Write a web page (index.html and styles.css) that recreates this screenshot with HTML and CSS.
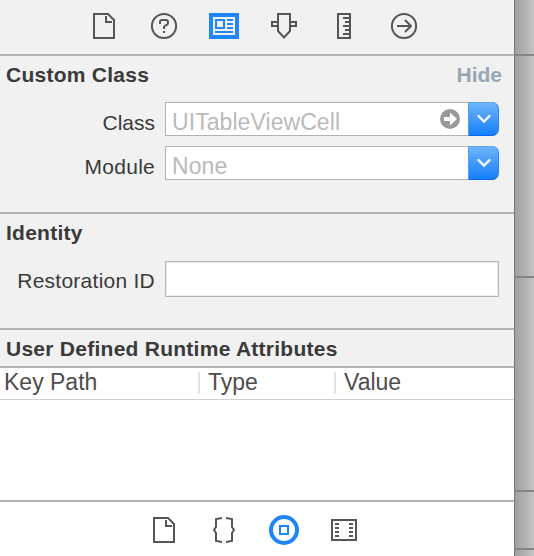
FILE: index.html
```html
<!DOCTYPE html>
<html lang="en">
<head>
<meta charset="utf-8">
<title>Identity Inspector</title>
<link rel="stylesheet" href="styles.css">
</head>
<body>
<div class="window">
  <main class="inspector">
    <nav class="toolbar">
      <svg class="icon" viewBox="0 0 30 30"><path d="M5 3H19L25 9V27H5ZM17 5V11H23"/></svg>
      <svg class="icon" viewBox="0 0 30 30"><circle cx="15" cy="15" r="12.1"/><path d="M11 13V11Q11 9 13 9H17Q19 9 19 11V12Q19 13.500 17 14.200Q15 15 15 16V18M15 20V22"/></svg>
      <svg class="icon" viewBox="0 0 30 30"><path class="blue-fill" d="M0 2H30V28H0Z"/><path class="white-fill" d="M4 6H26V24H4Z"/><path class="blue" d="M7 9H15V17H7ZM18 9H24M18 13H24M18 17H24M6 21H24"/></svg>
      <svg class="icon" viewBox="0 0 30 30"><path d="M9 3H21V20L15 26.500L9 20ZM8 11H3V15H8M22 11H27V15H22"/></svg>
      <svg class="icon" viewBox="0 0 30 30"><path d="M9 3H21V27H9ZM14 7H21M16 11H21M14 15H21M16 19H21M14 23H21"/></svg>
      <svg class="icon" viewBox="0 0 30 30"><circle cx="15" cy="15" r="12.1"/><path d="M8 15H21M16 9L22 15L16 21"/></svg>
    </nav>

    <section class="section custom">
      <header class="heading"><h2>Custom Class</h2><span class="hide">Hide</span></header>
      <div class="row">
        <label>Class</label>
        <div class="combo">
          <span class="value">UITableViewCell</span>
          <svg class="jump" viewBox="0 0 20 20"><circle cx="10" cy="10" r="10"/><path d="M4 8H10V3.500L17 10L10 16.500V12H4Z"/></svg>
          <span class="drop"><svg viewBox="0 0 14 10"><path d="M1.500 2L7 7.500L12.500 2"/></svg></span>
        </div>
      </div>
      <div class="row">
        <label class="wide">Module</label>
        <div class="combo">
          <span class="value">None</span>
          <span class="drop"><svg viewBox="0 0 14 10"><path d="M1.500 2L7 7.500L12.500 2"/></svg></span>
        </div>
      </div>
    </section>

    <section class="section identity">
      <header class="heading"><h2>Identity</h2></header>
      <div class="row">
        <label class="wide">Restoration ID</label>
        <div class="input"></div>
      </div>
    </section>

    <section class="section attributes">
      <header class="heading"><h2>User Defined Runtime Attributes</h2></header>
    </section>

    <div class="table">
      <div class="columns"><span>Key Path</span><span>Type</span><span>Value</span></div>
    </div>

    <footer class="library">
      <svg class="icon" viewBox="0 0 30 30"><path d="M5 3H19L25 9V27H5ZM17 5V11H23"/></svg>
      <svg class="icon" viewBox="0 0 30 30"><path d="M13 3L7 4V12L5 15L7 18V26L13 27M17 3L23 4V12L25 15L23 18V26L17 27"/></svg>
      <svg class="icon" viewBox="0 0 30 30"><circle class="blue ring" cx="15" cy="15" r="13"/><path class="blue" d="M11 11H19V19H11Z"/></svg>
      <svg class="icon" viewBox="0 0 30 30"><path d="M3 5H27V25H3ZM6 9H10M6 13H10M6 17H10M6 21H10M20 9H24M20 13H24M20 17H24M20 21H24"/></svg>
    </footer>
  </main>
  <aside class="edge"><i></i><i></i><i></i><i></i><i></i></aside>
</div>
</body>
</html>
```
FILE: styles.css
```css
* { box-sizing: border-box; }
body {
  margin: 0;
  overflow: hidden;
  font-family: "Liberation Sans", Arial, sans-serif;
  color: #3a3a3a;
}
.window { display: grid; grid-template-columns: 514px 20px; height: 556px; }
.inspector { display: flex; flex-direction: column; background: #f1f1f1; }

.toolbar {
  display: flex;
  justify-content: center;
  gap: 30px;
  height: 56px;
  padding: 11px 6px 0 0;
  border-bottom: 2px solid #b2b2b2;
}
.icon { width: 30px; height: 30px; fill: none; stroke: #565656; stroke-width: 2; }
.blue { stroke: #1f85fb; }
.ring { stroke-width: 4; }
.blue-fill { fill: #1f85fb; stroke: none; }
.white-fill { fill: #f1f1f1; stroke: none; }

.section { border-bottom: 2px solid #b2b2b2; }
.custom { height: 158px; }
.identity { height: 116px; }
.attributes { height: 38px; }
.heading {
  display: flex;
  justify-content: space-between;
  height: 38px;
  padding: 0 12px 0 6px;
  font-size: 21px;
  font-weight: bold;
  line-height: 38px;
}
h2 { margin: 0; font-size: 21px; letter-spacing: .26px; }
.hide { color: #98a6b4; }

.row { display: flex; height: 34px; margin: 8px 0 10px; }
label {
  width: 155px;
  margin-right: 10px;
  text-align: right;
  font-size: 21px;
  line-height: 42px;
}
.wide { letter-spacing: .25px; }
.combo {
  display: flex;
  align-items: center;
  width: 334px;
  height: 34px;
  padding-left: 6px;
  background: #fff;
  border: 1px solid #b2b2b2;
  border-right: 0;
  border-radius: 0 7px 7px 0;
}
.value {
  flex: 1;
  padding-top: 6px;
  color: #bababa;
  font-size: 23px;
  letter-spacing: .07px;
  line-height: 32px;
}
.jump { width: 20px; height: 20px; margin-right: 8px; fill: #999; }
.jump path { fill: #fff; }
.drop {
  display: flex;
  align-items: center;
  justify-content: center;
  width: 31px;
  height: 34px;
  background: linear-gradient(#6eb5fa, #157efb);
  border: 1px solid;
  border-color: #5ba6ef #2785f2 #0a69ef #4a9ef6;
  border-radius: 0 7px 7px 0;
}
.drop svg { width: 14px; height: 10px; fill: none; stroke: #fff; stroke-width: 2.3; stroke-linecap: round; }
.identity .row { margin-top: 9px; }
.identity label { line-height: 40px; }
.input {
  width: 334px;
  height: 36px;
  background: #fff;
  border: 1px solid #b2b2b2;
  box-shadow: inset 0 0 0 1px #ededed;
}

.table { height: 134px; background: #fff; border-bottom: 2px solid #b2b2b2; }
.columns {
  display: grid;
  grid-template-columns: 198px 136px 1fr;
  height: 32px;
  padding-top: 4px;
  border-bottom: 1px solid #d2d2d2;
  color: #4d4d4d;
  font-size: 23px;
  line-height: 20px;
}
.columns span { height: 22px; padding-left: 4px; }
.columns span + span { padding-left: 8px; border-left: 2px solid #e2e2e2; }

.library {
  display: flex;
  flex: 1;
  justify-content: center;
  gap: 30px;
  padding: 13px 6px 0 0;
  background: #fff;
}

.edge {
  display: grid;
  grid-template-rows: 56px 222px 214px 58px 6px;
  background: linear-gradient(90deg, #777 1px, #a0a0a0 1px, #c4c4c4);
}
.edge i { border-bottom: 2px solid #858585; }
.edge i:last-child { border: 0; }
```
